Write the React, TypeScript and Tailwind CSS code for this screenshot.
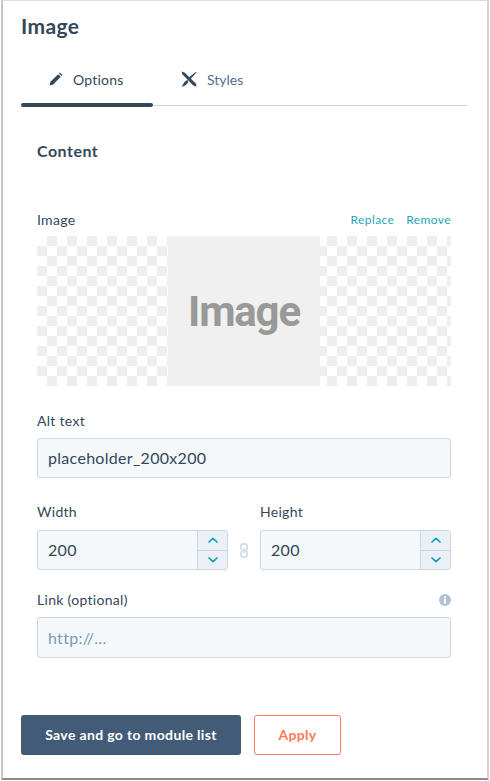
import React from "react";

const labelCls = "text-[14px] leading-[18px] tracking-[0.3px] text-[#33475b]";
const inputBase =
  "border border-[#cbd6e2] rounded-[3px] bg-[#f5f8fa] text-[16px] tracking-[0.3px] flex items-center";

function Stepper() {
  return (
    <div className="flex flex-col w-[30px] h-full border-l border-[#cbd6e2] bg-[#eaf0f6] shrink-0">
      <div className="flex-1 flex items-center justify-center border-b border-[#cbd6e2]">
        <svg width="10" height="6" viewBox="0 0 10 6" fill="none">
          <path d="M1 5 L5 1.3 L9 5" stroke="#00a4bd" strokeWidth="1.7" strokeLinecap="round" strokeLinejoin="round" />
        </svg>
      </div>
      <div className="flex-1 flex items-center justify-center">
        <svg width="10" height="6" viewBox="0 0 10 6" fill="none">
          <path d="M1 1 L5 4.7 L9 1" stroke="#00a4bd" strokeWidth="1.7" strokeLinecap="round" strokeLinejoin="round" />
        </svg>
      </div>
    </div>
  );
}

function NumberField({ label }: { label: string }) {
  return (
    <div className="flex flex-col gap-[9px]">
      <span className={labelCls}>{label}</span>
      <div className={`${inputBase} text-[#33475b] h-[40px] w-[191px] overflow-hidden`}>
        <span className="flex-1 pl-[10px]">200</span>
        <Stepper />
      </div>
    </div>
  );
}

export default function App() {
  return (
    <div className="w-[490px] h-[781px] bg-white" style={{ fontFamily: "Lato, 'Noto Sans', sans-serif" }}>
      <div className="w-[488px] h-[780px] ml-px border-l-2 border-t border-r-2 border-b-2 border-l-[#c4c4c4] border-t-[#dddddd] border-r-[#d4d4d4] border-b-[#8a8a8a] pl-[18px] pr-[20px] flex flex-col">
        <h1 className="text-[21px] leading-[24px] tracking-[0.4px] font-bold text-[#33475b] mt-[13px]">Image</h1>

        <div className="mt-[24px] flex border-b border-[#cbd6e2] h-[44px] relative">
          <div className="w-[132px] flex items-center pl-[28px] text-[14px] tracking-[0.2px] text-[#33475b] gap-[10px] relative pb-[9px]">
            <svg width="14" height="14" viewBox="0 0 14 14" fill="#33475b">
              <path d="M0.5 13.5 L1.4 9.8 L9.2 2.2 L11.8 4.8 L4.2 12.6 Z" />
              <path d="M10 1.4 L10.9 0.5 L13.5 3.1 L12.6 4 Z" />
            </svg>
            <span>Options</span>
            <div className="absolute left-0 right-0 bottom-[-2px] h-[4px] rounded-full bg-[#33475b]" />
          </div>
          <div className="flex items-center pl-[28px] text-[14px] text-[#516f90] gap-[10px] pb-[9px]">
            <svg width="16" height="16" viewBox="0 0 16 16" fill="#33475b">
              <path d="M0.5 0.5 L3.5 1.5 L14.8 12.6 L15.5 15.5 L12.6 14.8 L1.5 3.5 Z" />
              <path d="M15 0.8 L15.5 1.3 L9.6 8 L7.8 6.4 Z" />
              <path d="M6.2 9 L7.4 10.2 C6.8 12.8 4 15.4 0.5 15.5 C2.6 13.8 2.6 10.6 6.2 9 Z" />
            </svg>
            <span>Styles</span>
          </div>
        </div>

        <div className="px-[16px] flex flex-col">
          <h2 className="text-[16px] leading-[20px] tracking-[0.5px] font-bold text-[#33475b] mt-[35px]">Content</h2>

          <div className="mt-[50px] flex justify-between items-center h-[18px]">
            <span className={labelCls}>Image</span>
            <div className="flex gap-[12px] text-[12px] text-[#2aa5bd] tracking-[0.4px]">
              <span>Replace</span>
              <span>Remove</span>
            </div>
          </div>

          <div className="mt-[7px] h-[150px] flex justify-center bg-[repeating-conic-gradient(#ffffff_0_25%,#eeeeee_0_50%)] bg-[length:20px_20px] bg-[position:10px_0]">
            <div className="w-[152px] h-full bg-[#f0f0f0] flex items-center justify-center pt-[2px]">
              <span className="text-[42px] font-bold text-[#999999] tracking-[-1.2px] leading-none" style={{ fontFamily: "Roboto, sans-serif" }}>Image</span>
            </div>
          </div>

          <div className={`${labelCls} mt-[26px]`}>Alt text</div>
          <div className={`${inputBase} text-[#33475b] h-[40px] mt-[8px] pl-[10px]`}>placeholder_200x200</div>

          <div className="mt-[25px] flex items-end justify-between">
            <NumberField label="Width" />
            <div className="w-[23px] h-[40px] flex items-center justify-center">
              <svg width="8" height="15" viewBox="0 0 8 15" fill="none" stroke="#d5dfe9" strokeWidth="2">
                <path d="M2.6 7 C1.6 7 1 6.2 1 5.2 L1 3 C1 1.9 1.9 1 3 1 L5 1 C6.1 1 7 1.9 7 3 L7 5.2 C7 6.2 6.4 7 5.4 7" />
                <path d="M2.6 8 C1.6 8 1 8.8 1 9.8 L1 12 C1 13.1 1.9 14 3 14 L5 14 C6.1 14 7 13.1 7 12 L7 9.8 C7 8.8 6.4 8 5.4 8" />
                <path d="M4 5 L4 10" />
              </svg>
            </div>
            <NumberField label="Height" />
          </div>

          <div className="mt-[21px] flex justify-between items-center h-[18px]">
            <span className={labelCls}>Link (optional)</span>
            <svg width="12" height="12" viewBox="0 0 12 12">
              <circle cx="6" cy="6" r="6" fill="#b0c1d4" />
              <rect x="5" y="5" width="2" height="4.5" fill="#fff" />
              <rect x="5" y="2.5" width="2" height="1.8" fill="#fff" />
            </svg>
          </div>
          <div className={`${inputBase} mt-[8px] pl-[10px] h-[41px] text-[#7c98b6]`}>http://...</div>
        </div>

        <div className="mt-[57px] flex gap-[13px]">
          <div className="w-[220px] h-[40px] rounded-[3px] bg-[#425b76] text-white text-[14px] tracking-[0.35px] font-bold flex items-center justify-center pb-[2px]">
            Save and go to module list
          </div>
          <div className="w-[87px] h-[40px] rounded-[3px] border border-[#ff7a59] text-[#ff7a59] text-[14px] tracking-[0.3px] font-bold flex items-center justify-center pb-[2px]">
            Apply
          </div>
        </div>
      </div>
    </div>
  );
}
